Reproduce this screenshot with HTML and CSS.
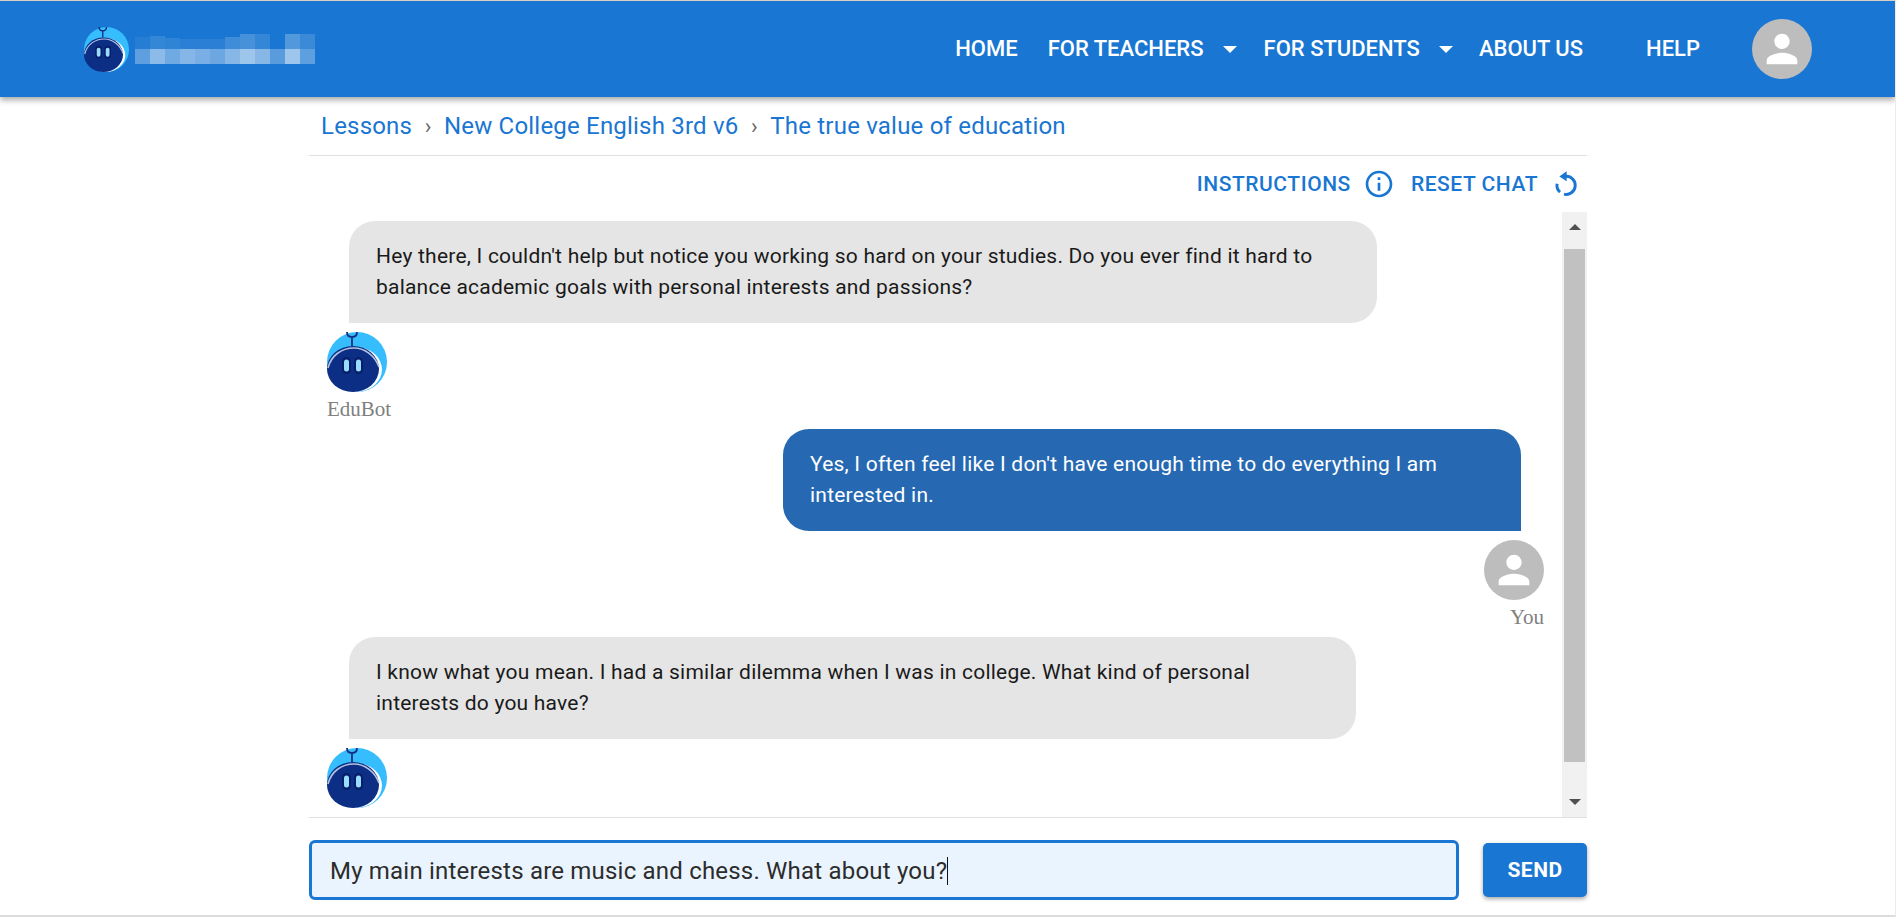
FILE: index.html
```html
<!DOCTYPE html>
<html lang="en">
<head>
    <meta charset="UTF-8">
    <meta name="viewport" content="width=device-width, initial-scale=1.0">
    <title>Lessons - The true value of education</title>
    <link rel="stylesheet" href="styles.css">
</head>
<body>
    <svg class="icon-defs" width="0" height="0">
        <symbol id="bot" viewBox="0 0 60 60">
            <circle cx="30" cy="30" r="30" fill="#35bdfd"/>
            <path d="M25 14V5M20 0c0 3 2 5 5 5s5-2 5-5" fill="none" stroke="#12307f" stroke-width="1.8"/>
            <ellipse cx="28.5" cy="37.5" rx="26.5" ry="22.5" fill="#ffffff"/>
            <ellipse cx="26" cy="37" rx="26" ry="23" fill="#0c2e85"/>
            <path d="M1 36C4 24 14 16 27 16c11 0 21 8 25 19" fill="none" stroke="#b4c2e2" stroke-width="1.6"/>
            <rect x="15" y="25" width="9" height="17" rx="4.5" fill="#071f6b"/>
            <rect x="17" y="27.5" width="5" height="12" rx="2.5" fill="#9adcfd"/>
            <rect x="27" y="25" width="9" height="17" rx="4.5" fill="#071f6b"/>
            <rect x="29" y="27.5" width="5" height="12" rx="2.5" fill="#9adcfd"/>
        </symbol>
        <symbol id="person" viewBox="0 0 24 24">
            <path d="M12 12c2.21 0 4-1.79 4-4s-1.79-4-4-4-4 1.79-4 4 1.79 4 4 4zm0 2c-2.67 0-8 1.34-8 4v2h16v-2c0-2.66-5.33-4-8-4z"/>
        </symbol>
    </svg>

    <header class="topbar">
        <div class="brand">
            <svg class="brand-logo"><use href="#bot"/></svg>
            <svg class="brand-name" width="184" height="30" viewBox="0 0 184 30">
                <g fill="#fff">
                    <rect x="4" y="15" width="15" height="15" opacity=".3"/>
                    <rect x="19" y="15" width="15" height="15" opacity=".5"/>
                    <rect x="34" y="15" width="15" height="15" opacity=".38"/>
                    <rect x="49" y="15" width="15" height="15" opacity=".47"/>
                    <rect x="64" y="15" width="15" height="15" opacity=".42"/>
                    <rect x="79" y="15" width="15" height="15" opacity=".36"/>
                    <rect x="94" y="15" width="15" height="15" opacity=".48"/>
                    <rect x="109" y="15" width="15" height="15" opacity=".58"/>
                    <rect x="124" y="15" width="15" height="15" opacity=".48"/>
                    <rect x="139" y="15" width="15" height="15" opacity=".28"/>
                    <rect x="154" y="15" width="15" height="15" opacity=".58"/>
                    <rect x="169" y="15" width="15" height="15" opacity=".3"/>
                    <rect x="4" y="3" width="15" height="12" opacity=".06"/>
                    <rect x="19" y="2" width="15" height="13" opacity=".12"/>
                    <rect x="34" y="4" width="15" height="11" opacity=".1"/>
                    <rect x="49" y="5" width="15" height="10" opacity=".08"/>
                    <rect x="64" y="5" width="15" height="10" opacity=".08"/>
                    <rect x="79" y="5" width="15" height="10" opacity=".08"/>
                    <rect x="94" y="3" width="15" height="12" opacity=".17"/>
                    <rect x="109" y="0" width="15" height="15" opacity=".2"/>
                    <rect x="124" y="0" width="15" height="15" opacity=".12"/>
                    <rect x="154" y="0" width="15" height="15" opacity=".25"/>
                    <rect x="169" y="0" width="15" height="15" opacity=".15"/>
                </g>
            </svg>
        </div>
        <nav class="topnav">
            <a class="nav-home">Home</a>
            <a class="nav-teachers">For Teachers</a>
            <span class="caret"></span>
            <a class="nav-students">For Students</a>
            <span class="caret"></span>
            <a class="nav-about">About Us</a>
            <a class="nav-help">Help</a>
            <span class="avatar nav-avatar"><svg><use href="#person"/></svg></span>
        </nav>
    </header>

    <main class="page">
        <div class="crumbs">
            <a>Lessons</a><span class="crumb-sep">›</span><a>New College English 3rd v6</a><span class="crumb-sep">›</span><a>The true value of education</a>
        </div>

        <div class="tools">
            <a class="tool">Instructions</a>
            <svg class="tool-icon" viewBox="0 0 24 24"><path d="M11 7h2v2h-2zm0 4h2v6h-2zm1-9C6.48 2 2 6.48 2 12s4.48 10 10 10 10-4.48 10-10S17.52 2 12 2zm0 18c-4.41 0-8-3.59-8-8s3.59-8 8-8 8 3.59 8 8-3.59 8-8 8z"/></svg>
            <a class="tool tool-reset">Reset Chat</a>
            <svg class="tool-icon reset-icon" viewBox="0 0 24 24">
                <path d="M12 6.2A6.8 6.8 0 1 1 10.5 19.6M7.5 18.1A6.8 6.8 0 0 1 5.3 11.8" fill="none" stroke="#1976d2" stroke-width="2.2"/>
                <path d="M12.5 2.5L7 6.3l5.5 3.7z"/>
            </svg>
        </div>

        <div class="chat">
            <div class="messages">
                <div class="msg msg-bot">
                    <div class="bubble bubble-1">Hey there, I couldn't help but notice you working so hard on your studies. Do you ever find it hard to balance academic goals with personal interests and passions?</div>
                    <svg class="msg-avatar"><use href="#bot"/></svg>
                    <div class="msg-name">EduBot</div>
                </div>
                <div class="msg msg-user">
                    <div class="bubble bubble-2">Yes, I often feel like I don't have enough time to do everything I am interested in.</div>
                    <span class="avatar"><svg><use href="#person"/></svg></span>
                    <div class="msg-name">You</div>
                </div>
                <div class="msg msg-bot">
                    <div class="bubble bubble-3">I know what you mean. I had a similar dilemma when I was in college. What kind of personal interests do you have?</div>
                    <svg class="msg-avatar"><use href="#bot"/></svg>
                </div>
            </div>
            <div class="scrollbar">
                <span class="arrow arrow-up"></span>
                <div class="thumb"></div>
                <span class="arrow arrow-down"></span>
            </div>
        </div>

        <div class="composer">
            <div class="composer-input">My main interests are music and chess. What about you?<span class="text-caret"></span></div>
            <button class="send">Send</button>
        </div>
    </main>
</body>
</html>
```

FILE: styles.css
```css
html, body {
    height: 100%;
}
body {
    margin: 0;
    height: 917px;
    box-sizing: border-box;
    overflow: hidden;
    display: flex;
    flex-direction: column;
    font-family: Roboto, Arial, sans-serif;
    background-color: #fff;
    border-top: 1px solid #d8d0c4;
    border-bottom: 2px solid #dcdcdc;
    border-right: 1px solid #ececec;
}
a {
    color: inherit;
    text-decoration: none;
}
.icon-defs {
    position: absolute;
}
.topbar {
    flex: none;
    height: 96px;
    display: flex;
    align-items: center;
    justify-content: space-between;
    padding: 0 83px 0 84px;
    background-color: #1976d2;
    box-shadow: 0 3px 6px rgba(0, 0, 0, 0.35);
    color: #fff;
    position: relative;
    z-index: 2;
}
.brand {
    display: flex;
    align-items: center;
}
.brand-logo {
    width: 45px;
    height: 45px;
}
.brand-name {
    margin-left: 2px;
}
.topnav {
    display: flex;
    align-items: center;
    font-size: 22px;
    font-weight: 500;
    text-transform: uppercase;
}
.topnav a {
    padding-bottom: 2px;
}
.nav-teachers {
    margin-left: 30px;
}
.nav-students {
    margin-left: 27px;
}
.nav-about {
    margin-left: 26px;
}
.nav-help {
    margin-left: 63px;
}
.nav-avatar {
    margin-left: 52px;
}
.caret {
    margin-left: 19px;
    width: 0;
    height: 0;
    border-left: 7px solid transparent;
    border-right: 7px solid transparent;
    border-top: 7px solid #fff;
}
.avatar {
    display: inline-flex;
    align-items: center;
    justify-content: center;
    width: 60px;
    height: 60px;
    border-radius: 50%;
    background-color: #bdbdbd;
}
.avatar svg {
    width: 46px;
    height: 46px;
    fill: #fff;
}
.page {
    flex: 1;
    min-height: 0;
    width: 1278px;
    margin-left: 309px;
    display: flex;
    flex-direction: column;
}
.crumbs {
    flex: none;
    height: 59px;
    box-sizing: border-box;
    border-bottom: 1px solid #e0e0e0;
    padding: 14px 0 0 12px;
    font-size: 24px;
    line-height: 30px;
    letter-spacing: 0.2px;
    color: #1976d2;
}
.crumb-sep {
    margin: 0 12.5px;
    color: #666;
    font-size: 22px;
}
.tools {
    flex: none;
    height: 56px;
    display: flex;
    align-items: center;
    justify-content: flex-end;
    padding-right: 5px;
    color: #1976d2;
    fill: #1976d2;
}
.tool {
    font-size: 21px;
    font-weight: 500;
    text-transform: uppercase;
    letter-spacing: 0.55px;
}
.tool-reset {
    margin-left: 16px;
}
.tool-icon {
    width: 32px;
    height: 32px;
    margin-left: 12px;
}
.chat {
    flex: none;
    height: 605px;
    display: flex;
    border-bottom: 1px solid #e0e0e0;
}
.messages {
    flex: 1;
    min-width: 0;
    overflow: hidden;
    padding: 9px 0 0;
    box-sizing: border-box;
}
.msg {
    display: flex;
    flex-direction: column;
    margin-bottom: 8px;
}
.msg-bot {
    align-items: flex-start;
    padding-left: 18px;
}
.msg-user {
    align-items: flex-end;
    padding-right: 18px;
}
.bubble {
    box-sizing: border-box;
    height: 102px;
    padding: 20px 27px;
    border-radius: 26px;
    font-size: 21px;
    line-height: 31px;
    letter-spacing: 0.22px;
}
.msg-bot .bubble {
    margin-left: 22px;
    background-color: #e5e5e5;
    color: #1a1a1a;
    border-bottom-left-radius: 0;
}
.msg-user .bubble {
    margin-right: 23px;
    background-color: #2669b2;
    color: #fff;
    border-bottom-right-radius: 0;
}
.bubble-1 {
    width: 1028px;
}
.bubble-2 {
    width: 738px;
}
.bubble-3 {
    width: 1007px;
}
.msg-avatar {
    width: 60px;
    height: 60px;
    margin-top: 9px;
}
.msg-user .avatar {
    margin-top: 9px;
}
.msg-name {
    margin-top: 6px;
    font-family: "Liberation Serif", "Times New Roman", serif;
    font-size: 21px;
    line-height: 23px;
    color: #808080;
}
.scrollbar {
    flex: none;
    width: 25px;
    display: flex;
    flex-direction: column;
    align-items: center;
    background-color: #f1f1f1;
}
.thumb {
    flex: 1;
    width: 21px;
    background-color: #c1c1c1;
}
.arrow {
    flex: none;
    width: 0;
    height: 0;
    border-left: 6px solid transparent;
    border-right: 6px solid transparent;
}
.arrow-up {
    margin: 12px 0 19px;
    border-bottom: 6px solid #505050;
}
.arrow-down {
    margin: 37px 0 12px;
    border-top: 6px solid #505050;
}
.composer {
    flex: none;
    display: flex;
    align-items: center;
    gap: 24px;
    margin-top: 22px;
}
.composer-input {
    flex: 1;
    height: 60px;
    box-sizing: border-box;
    display: flex;
    align-items: center;
    padding: 2px 18px 0;
    border: 3px solid #1976d2;
    border-radius: 6px;
    background-color: #eaf4fe;
    color: #2c2c2c;
    font-size: 24px;
    letter-spacing: 0.2px;
}
.text-caret {
    width: 1px;
    height: 28px;
    background-color: #111;
}
.send {
    flex: none;
    width: 104px;
    height: 54px;
    border: none;
    border-radius: 5px;
    background-color: #1976d2;
    color: #fff;
    font-family: inherit;
    font-size: 21px;
    font-weight: 700;
    letter-spacing: 0.5px;
    text-transform: uppercase;
    box-shadow: 0 2px 4px rgba(0, 0, 0, 0.35);
}
```
